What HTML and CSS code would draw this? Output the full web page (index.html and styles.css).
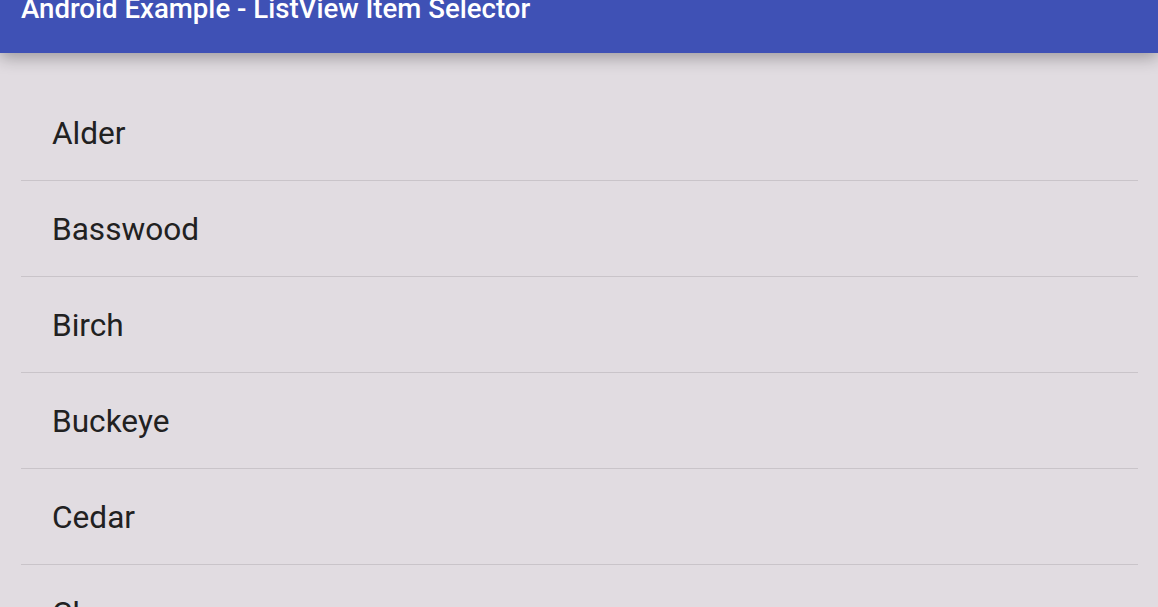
FILE: index.html
```html
<!DOCTYPE html>
<html lang="en">
<head>
<meta charset="UTF-8">
<meta name="viewport" content="width=device-width, initial-scale=1.0">
<title>Android Example - ListView Item Selector</title>
<link rel="stylesheet" href="styles.css">
</head>
<body>

<div class="toolbar">
  <h1 class="toolbar-title">Android Example - ListView Item Selector</h1>
</div>

<ul class="tree-list">
  <li class="tree-item">Alder</li>
  <li class="tree-item">Basswood</li>
  <li class="tree-item">Birch</li>
  <li class="tree-item">Buckeye</li>
  <li class="tree-item">Cedar</li>
  <li class="tree-item">Cherry</li>
</ul>

</body>
</html>
```

FILE: styles.css
```css
body {
  margin: 0;
  font-family: Roboto, "Liberation Sans", sans-serif;
  background-color: #e1dce1;
  overflow: hidden;
}
.toolbar {
  position: relative;
  z-index: 1;
  height: 53px;
  background-color: #3f51b5;
  box-shadow: 0 4px 16px rgba(0, 0, 0, 0.32);
}
.toolbar-title {
  margin: 0;
  padding-left: 21px;
  color: white;
  font-size: 27.6px;
  font-weight: 500;
  line-height: 28px;
  transform: translateY(-5px);
}
.tree-list {
  list-style: none;
  margin: 0;
  padding: 32px 20px 0 21px;
}
.tree-item {
  height: 95px;
  display: flex;
  align-items: center;
  padding-left: 31px;
  padding-top: 2px;
  box-sizing: border-box;
  height: 96px;
  border-bottom: 1px solid #c9c4c9;
  font-size: 31.6px;
  color: #212121;
}
```
